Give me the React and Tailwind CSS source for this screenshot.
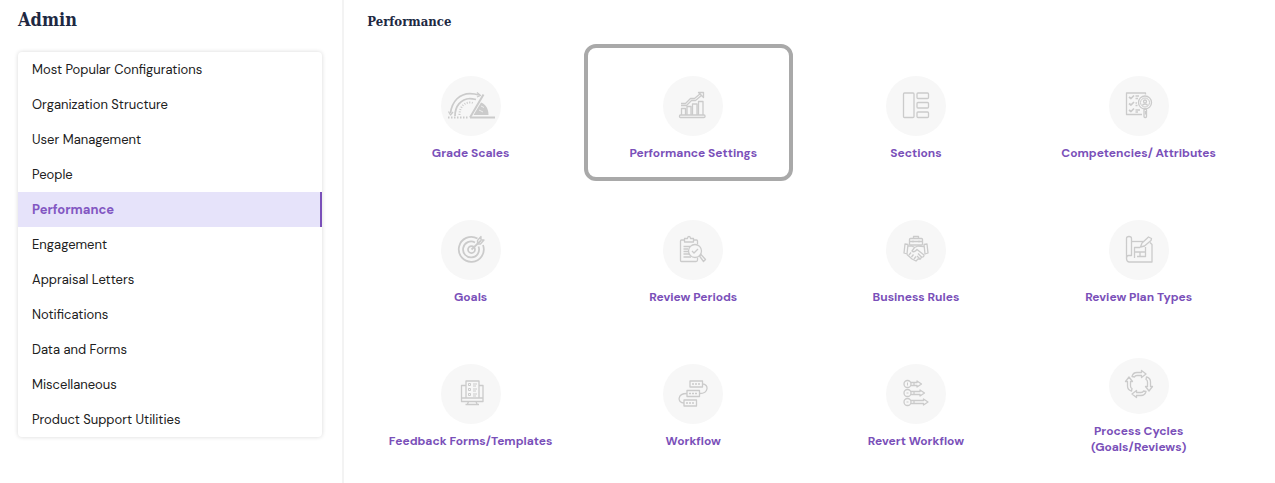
import React, { useState } from 'react';
import clsx from 'clsx';

const menuItems = [
    'Most Popular Configurations',
    'Organization Structure',
    'User Management',
    'People',
    'Performance',
    'Engagement',
    'Appraisal Letters',
    'Notifications',
    'Data and Forms',
    'Miscellaneous',
    'Product Support Utilities',
];

// All tile drawings share a 60x60 canvas, the size of the round background
const GradeScalesIcon = () => (
    <>
        <path d="M9.5 37C11 25 19 17.500 29 17.500C32 17.500 35 18 38 19" strokeWidth="1.750" />
        <path d="M7.500 35.500L9.500 39L12 36M36 16.500L39.500 19.500L36 21" />
        <path d="M14 40C14 30 20 23 29 22.500C31 22.500 33 23 35 23.500" strokeWidth="1.750" />
        <path d="M18.500 39C18.500 31 23 26.500 29 26.500C31 26.500 32 27 33 27.500" strokeWidth="2" strokeDasharray="1 1.500" />
        <path d="M7 41.500H28" strokeWidth="2" strokeDasharray="1.500 1.500" />
        <path d="M29 41.500L42.500 18.500" strokeWidth="2" />
        <path d="M29 41.500H54" strokeWidth="2" />
        <path d="M32.500 39L40 26.500C45 28.500 47.500 33 47.500 39Z" fill="currentColor" stroke="none" />
        <path d="M40 30l3 1.500M38 34l4 2" stroke="#f7f7f7" strokeWidth="0.750" />
    </>
);

const SettingsIcon = () => (
    <>
        <rect x="16.500" y="39" width="25.500" height="2.500" rx="1" />
        <path d="M18.500 39V32.500H22.500V39M24 39V30.500H28V39M29.500 39V28H34V39M35.500 39V25.500H40V39" />
        <path d="M18 27.500H22.500L27.500 22.500H31.500L37.500 17.500M18 29.500H23.500L28.500 24.500H32.500L39 19" />
        <path d="M35.500 16.500H40.500V21.500Z" />
    </>
);

const SectionsIcon = () => (
    <>
        <rect x="17.500" y="17" width="10.500" height="24.500" rx="1" />
        <rect x="31" y="17" width="11.500" height="5.500" rx="1" />
        <rect x="31" y="26.500" width="11.500" height="5.500" rx="1" />
        <rect x="31" y="36" width="11.500" height="5.500" rx="1" />
    </>
);

const CompetenciesIcon = () => (
    <>
        <path d="M36.500 18.500V17H17.500V38.500H33M36.500 35V38.500" />
        <path d="M20 21l2 1.500 3-3M20 27.500l2 1.500 3-3M20 34l2 1.500 3-3" strokeWidth="1.750" />
        <path d="M26.500 20H30M26.500 22.500H29M26.500 27H28M26.500 29.500H28.500M26.500 34H31M26.500 36H29" />
        <circle cx="36" cy="26.500" r="6.500" />
        <circle cx="36" cy="26.500" r="4.500" strokeWidth="1" />
        <circle cx="36" cy="25.500" r="1.500" />
        <path d="M33.500 29.500C34 27.500 38 27.500 38.500 29.500" />
        <rect x="35" y="33" width="2.500" height="8.500" rx="1" />
    </>
);

const GoalsIcon = () => (
    <>
        <path d="M36.500 18.500A12.500 12.500 0 1 0 42 25" strokeWidth="1.750" />
        <path d="M34 22.500A8 8 0 1 0 37.500 26.500" strokeWidth="1.750" />
        <circle cx="30.500" cy="29.500" r="3.500" strokeWidth="1.750" />
        <path d="M30.500 29.500L40 20.500" strokeWidth="1.750" />
        <path d="M36.500 24V20.500L40 16.500V20H43L39.500 24Z" />
    </>
);

const ReviewPeriodsIcon = () => (
    <>
        <path d="M21.500 20H18.500Q17.500 20 17.500 21V40.500Q17.500 41.500 18.500 41.500H33Q34.500 41.500 34.500 40V37.500M30.500 20H33.500Q34.500 20 34.500 21V24" />
        <path d="M21.500 22V18.500H24.500Q24.500 16.500 26 16.500T27.500 18.500H30.500V22Z" />
        <path d="M20.500 26.500H27M20.500 29H25M20.500 31.500H25M20.500 34H26M20.500 37H28" />
        <circle cx="32" cy="31" r="6.500" />
        <path d="M29 31l2 2 4-4M36.500 36L38 34.500L42.500 39.500L40.500 41.500Z" />
    </>
);

const BusinessRulesIcon = () => (
    <>
        <rect x="23.500" y="18.500" width="13" height="6.500" rx="1" />
        <path d="M27.500 18.500V16.500H32.500V18.500M23.500 21.500H36.500M27 20.500V22.500M33 20.500V22.500" />
        <path d="M18 33L19 24L22 24.500L21 34ZM42 33L41 24L38 24.500L39 34Z" />
        <path d="M22 26L26 26L28.500 27.500L32 26L38 26.500M28.500 27.500L26 31Q28 33 31 29.500L38 35Q38 37.500 35.500 37L34.500 39L32 39L30 41L26 39L21 34.500" />
        <path d="M23 35L25 32.500M25.500 37L27.500 34.500M28 39L30 36.500M32 33.500L35.500 37M31 36L34 39" />
    </>
);

const PlanTypesIcon = () => (
    <>
        <path d="M17.500 38.500V18.500Q17.500 16.500 20 16.500T22.500 18.500V35.500H19.500Q17.500 35.500 17.500 38.500T20 42H43V24.500L41 22.500" />
        <path d="M22.500 21.500H34" />
        <path d="M31.500 27L33 23L39.500 17L42.500 18.500L42 20.500L35.500 26Z" />
        <path d="M25.500 38V27.500H31M36.500 27V36.500H31M25.500 32H36.500M31 32V36.500H28" />
    </>
);

const FeedbackFormsIcon = () => (
    <>
        <path d="M25 21.500H20.500V37.500H42V21.500H38" />
        <path d="M20.500 34H42M27.500 37.500L26.500 40M35 37.500L36 40M24.500 40.500H38" />
        <path d="M25 34V17H38V34" />
        <path d="M27.500 19.500h2v2h-2zM27.500 24.500h2v2h-2zM27.500 29.500h2v2h-2z" strokeWidth="1" />
        <path d="M32 20H36M32 22H35M32 25H36M32 27H35M32 30H36M32 32H35" strokeWidth="1" />
    </>
);

const WorkflowIcon = () => (
    <>
        <rect x="27" y="17" width="12.500" height="6" />
        <rect x="24" y="26.500" width="12.500" height="6" />
        <rect x="21" y="36" width="12.500" height="6" />
        <path d="M39.500 20C46 20 46 29.500 36.500 29.500M24 29.500C14 29.500 14 39 21 39" />
        <path d="M29 20H38M26 29.500H35M23 39H32" strokeDasharray="2 1" />
    </>
);

const RevertWorkflowIcon = () => (
    <>
        <circle cx="21.500" cy="20" r="3.500" />
        <circle cx="21.500" cy="29" r="3.500" />
        <circle cx="21.500" cy="38" r="3.500" />
        <path d="M25 18.500H31V17L35.500 20L31 23V21.500H25M28 18.500V21.500" />
        <path d="M25 27.500H34V26L38.500 29L34 32V30.500H25M28 27.500V30.500" />
        <path d="M25 36.500H37.500V35L42 38L37.500 41V39.500H25M28 36.500V39.500" />
        <path d="M21.500 18.500V21.500M20.500 29H22.500M20.500 38H22.500" strokeWidth="1" />
    </>
);

const cycleArrow = 'M23 20.500Q24 16.500 28 16.500H32.500V14.500L37 18L32.500 21.500V19.500H28Q26 19.500 25.500 21Z';

const ProcessCyclesIcon = () => (
    <>
        <path d={cycleArrow} />
        <path d={cycleArrow} transform="rotate(90 30 28)" />
        <path d={cycleArrow} transform="rotate(180 30 28)" />
        <path d={cycleArrow} transform="rotate(270 30 28)" />
    </>
);

const tiles = [
    { label: 'Grade Scales', icon: GradeScalesIcon },
    { label: 'Performance Settings', icon: SettingsIcon, highlighted: true },
    { label: 'Sections', icon: SectionsIcon },
    { label: 'Competencies/ Attributes', icon: CompetenciesIcon },
    { label: 'Goals', icon: GoalsIcon },
    { label: 'Review Periods', icon: ReviewPeriodsIcon },
    { label: 'Business Rules', icon: BusinessRulesIcon },
    { label: 'Review Plan Types', icon: PlanTypesIcon },
    { label: 'Feedback Forms/Templates', icon: FeedbackFormsIcon },
    { label: 'Workflow', icon: WorkflowIcon },
    { label: 'Revert Workflow', icon: RevertWorkflowIcon },
    { label: 'Process Cycles', secondLine: '(Goals/Reviews)', icon: ProcessCyclesIcon },
];

const Tile = ({ label, secondLine, icon: Icon, highlighted }) => (
    <div className="relative flex h-36 items-center justify-center">
        {highlighted && (
            <div className="pointer-events-none absolute -top-0.5 bottom-[9px] left-0.5 right-3 rounded-xl border-4 border-[#a9a9a9]" />
        )}
        <a href="#" className="flex flex-col items-center gap-[9px] text-center text-xs leading-4 font-bold text-[#7a50b9]">
            <span className={clsx('flex w-[60px] items-center justify-center rounded-[50%] bg-[#f7f7f7]', secondLine ? 'h-14' : 'h-[60px]')}>
                <svg
                    viewBox="0 0 60 60"
                    className="size-[60px] shrink-0 text-[#cbcbcb]"
                    fill="none"
                    stroke="currentColor"
                    strokeWidth="1.300"
                    strokeLinejoin="round"
                    aria-hidden="true"
                >
                    <Icon />
                </svg>
            </span>
            <span>
                {label}
                {secondLine && <span className="block">{secondLine}</span>}
            </span>
        </a>
    </div>
);

const App = () => {
    const [active, setActive] = useState('Performance');

    return (
        <div className="flex min-h-screen bg-white font-['DM_Sans','Inter',sans-serif]">
            <aside className="w-[27%] shrink-0 border-r-2 border-[#f3f3f3] pl-[18px] pr-5">
                <h1 className="pt-2 text-lg leading-6 font-bold text-[#202842] font-['Roboto_Slab','DejaVu_Serif_Condensed','DejaVu_Serif',serif]">Admin</h1>
                <nav className="mt-5 overflow-hidden rounded-sm shadow-[0_0_4px_rgba(0,0,0,0.16)]">
                    <ul>
                        {menuItems.map((item) => (
                            <li key={item}>
                                <button
                                    type="button"
                                    onClick={() => setActive(item)}
                                    className={clsx(
                                        'block h-[35px] w-full cursor-pointer px-3.5 text-left text-[13px] leading-5',
                                        item === active
                                            ? 'border-r-2 border-[#7a50b9] bg-[#e6e3fa] font-bold text-[#8257c2]'
                                            : 'text-[#202020]'
                                    )}
                                >
                                    {item}
                                </button>
                            </li>
                        ))}
                    </ul>
                </nav>
            </aside>

            <main className="min-w-0 grow pl-[15px] pr-[25px]">
                <h2 className="pl-2 pt-3 text-[13px] leading-5 font-bold text-[#202842] font-['Roboto_Slab','DejaVu_Serif_Condensed','DejaVu_Serif',serif]">Performance</h2>
                <div className="mt-3.5 grid grid-cols-4">
                    {tiles.map((tile) => (
                        <Tile key={tile.label} {...tile} />
                    ))}
                </div>
            </main>
        </div>
    );
};

export default App;
